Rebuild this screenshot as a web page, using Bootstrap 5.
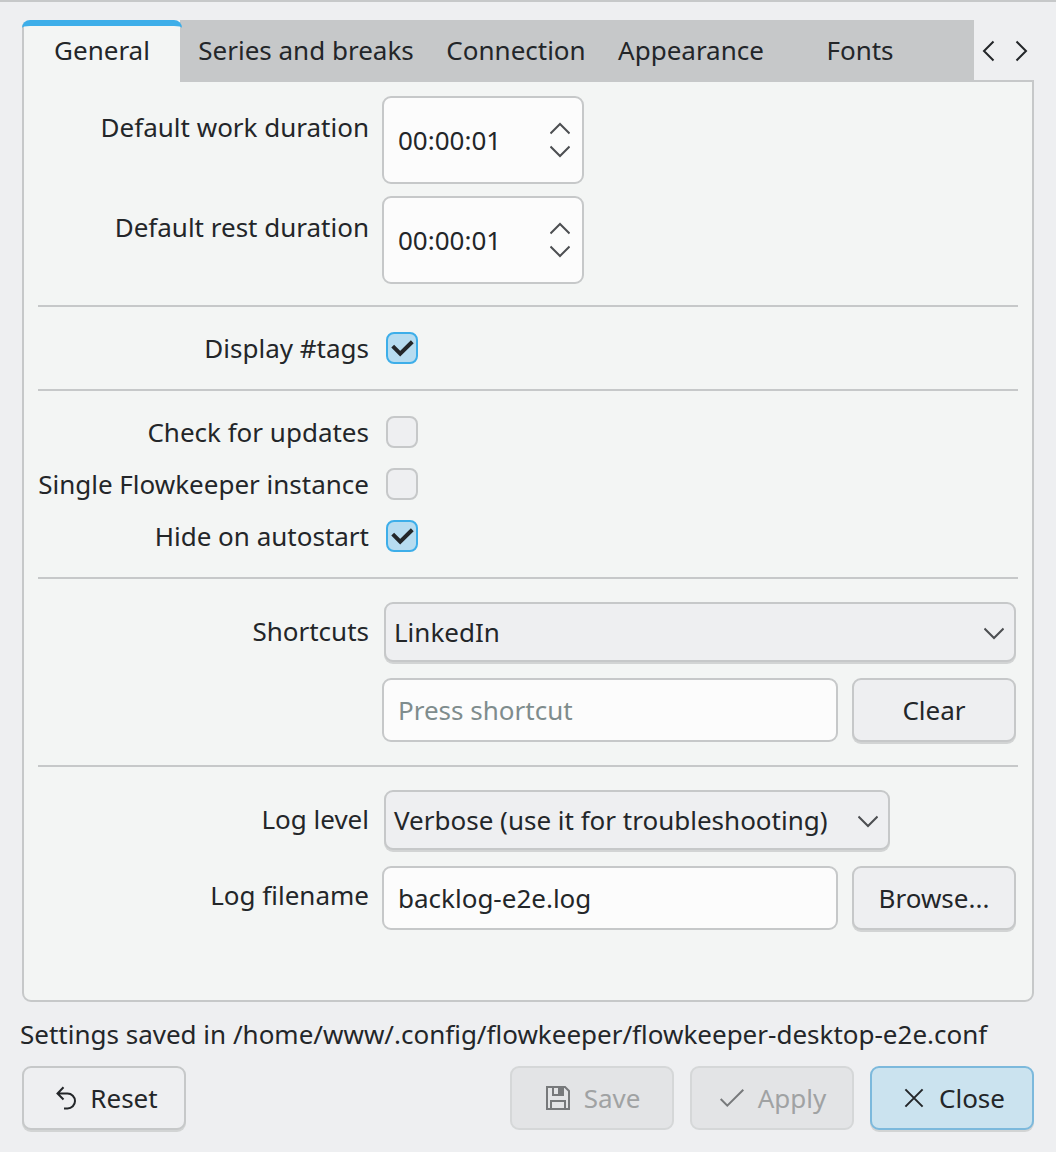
<!DOCTYPE html>
<html lang="en">
<head>
<meta charset="utf-8">
<meta name="viewport" content="width=device-width, initial-scale=1">
<title>Settings</title>
<link href="https://cdn.jsdelivr.net/npm/bootstrap@5.3.0/dist/css/bootstrap.min.css" rel="stylesheet">
<style>
  :root { --line: #c6c8c9; --win: #eeeff1; --view: #f3f5f4; --ink: #232629; --accent: #3daee9; }
  body { background: var(--win); color: var(--ink); font-family: "Noto Sans", sans-serif; font-size: 26px; line-height: 36px; }
  .dialog-window { width: 1056px; height: 1152px; border-top: 2px solid var(--line); padding: 18px 22px 0; overflow: hidden; }
  svg { display: block; flex: none; fill: none; }

  /* tabs */
  .tab-strip { height: 60px; }
  .tab-strip .nav { width: 952px; flex: none; --bs-nav-link-color: var(--ink); --bs-nav-link-hover-color: var(--ink); }
  .tab-strip .nav-item { height: 60px; background: var(--line); }
  .tab-strip .nav-link { padding: 12px 0; text-align: center; font-size: inherit; font-weight: 400; color: var(--ink); white-space: nowrap; }
  .tab-strip .nav-item.current { position: relative; width: 158px; height: 62px; background: linear-gradient(to right, var(--line) 2px, var(--view) 2px); border-radius: 8px 0 0 0; }
  .tab-strip .nav-item.current .nav-link, .tab-strip .w-series .nav-link { padding-left: 2px; }
  .tab-strip .nav-item.current::before { content: ""; position: absolute; left: 0; top: 0; width: 160px; height: 8px; border-top: 6px solid var(--accent); border-radius: 9px 9px 0 0; }
  .w-series { width: 250px; } .w-conn { width: 172px; } .w-appear { width: 178px; } .w-fonts { width: 160px; }
  .scroll-btn { border: 0; background: none; padding: 0; width: 30px; height: 60px; }

  /* settings page */
  .settings-page { height: 922px; background: var(--view); border: 2px solid var(--line); border-radius: 0 0 9px 9px; padding: 14px 14px 0; }
  .field-label { width: 331px; margin-right: 13px; text-align: right; white-space: nowrap; flex: none; }
  .lbl-spin { padding-top: 13px; } .lbl-box { padding-top: 11px; }
  .rule { height: 2px; background: var(--line); }
  .m-spin { margin: 21px 0 25px; } .m-check { margin: 25px 0; } .m-mix { margin: 25px 0 23px; } .m-box { margin: 23px 0; }
  .g12 { gap: 12px; } .g14 { gap: 14px; } .g16 { gap: 16px; } .g20 { gap: 20px; }

  .entry { background: #fcfcfc; border: 2px solid var(--line); border-radius: 9px; }
  .time-spin { width: 202px; height: 88px; padding: 0 12px 0 14px; }
  .line-entry { width: 456px; height: 64px; padding: 0 14px; color: var(--ink); font-size: inherit; line-height: 36px; }
  .line-entry::placeholder { color: #7f8c8d; opacity: 1; }
  .line-entry:focus { outline: 0; }
  .spin-arrows { gap: 10px; }

  .tick-row { height: 32px; }
  .tick-box { width: 32px; height: 32px; margin-left: 4px; border: 2px solid var(--line); border-radius: 8px; background: var(--win); }
  .tick-box.on { background: #b7dcf0; border-color: var(--accent); }

  .push { --bs-btn-color: var(--ink); --bs-btn-hover-color: var(--ink); --bs-btn-bg: var(--win); --bs-btn-hover-bg: var(--win); --bs-btn-border-color: var(--line); --bs-btn-hover-border-color: var(--line);
    --bs-btn-padding-x: 0; --bs-btn-padding-y: 0; --bs-btn-font-size: 26px; --bs-btn-border-width: 2px; --bs-btn-border-radius: 9px;
    --bs-btn-disabled-color: #a0a2a3; --bs-btn-disabled-bg: #e3e4e6; --bs-btn-disabled-border-color: #d5d7d8; --bs-btn-disabled-opacity: 1;
    width: 164px; height: 64px; line-height: 36px; box-shadow: 0 2px 0 #d2d4d4; }
  .push:disabled { box-shadow: none; }
  .push.primary { --bs-btn-bg: #cbe3ef; --bs-btn-border-color: #7cb9dc; --bs-btn-hover-bg: #cbe3ef; --bs-btn-hover-border-color: #7cb9dc; }
  .combo { height: 60px; margin-left: 2px; padding: 0 10px 0 8px; }
  .combo svg { margin-top: 2px; }
  .combo-wide { width: 632px; } .combo-log { width: 506px; }
  .icon-gap { gap: 8px; }
  .icon-gap:disabled svg { margin: 0 2px 0 -2px; }
  .icon-gap.primary svg { margin: 0 1px 0 -1px; }
  .status-line { margin: 14px 0 14px -2px; height: 36px; white-space: nowrap; }
</style>
</head>
<body>
<div class="dialog-window">
  <div class="tab-strip d-flex">
    <ul class="nav flex-nowrap">
      <li class="nav-item current"><a class="nav-link" href="#">General</a></li>
      <li class="nav-item w-series"><a class="nav-link" href="#">Series and breaks</a></li>
      <li class="nav-item w-conn"><a class="nav-link" href="#">Connection</a></li>
      <li class="nav-item w-appear"><a class="nav-link" href="#">Appearance</a></li>
      <li class="nav-item w-fonts"><a class="nav-link" href="#">Fonts</a></li>
      <li class="nav-item flex-fill"></li>
    </ul>
    <button class="scroll-btn" aria-label="Previous tabs"><svg width="30" height="60" stroke="#232629" stroke-width="2"><path d="M19.500 21.500 10 31l9.500 9.500"/></svg></button>
    <button class="scroll-btn" aria-label="Next tabs"><svg width="30" height="60" stroke="#232629" stroke-width="2"><path d="M12.500 21.500 22 31l-9.500 9.500"/></svg></button>
  </div>

  <main class="settings-page">
    <div class="d-flex flex-column g12">
      <div class="d-flex">
        <div class="field-label lbl-spin">Default work duration</div>
        <div class="entry time-spin d-flex align-items-center justify-content-between">
          <span>00:00:01</span>
          <span class="spin-arrows d-flex flex-column">
            <svg width="20" height="14" stroke="#4d4f52" stroke-width="2"><path d="M.5 12.500 10 3l9.500 9.500"/></svg>
            <svg width="20" height="14" stroke="#4d4f52" stroke-width="2"><path d="M.5 1.500 10 11l9.500-9.500"/></svg>
          </span>
        </div>
      </div>
      <div class="d-flex">
        <div class="field-label lbl-spin">Default rest duration</div>
        <div class="entry time-spin d-flex align-items-center justify-content-between">
          <span>00:00:01</span>
          <span class="spin-arrows d-flex flex-column">
            <svg width="20" height="14" stroke="#4d4f52" stroke-width="2"><path d="M.5 12.500 10 3l9.500 9.500"/></svg>
            <svg width="20" height="14" stroke="#4d4f52" stroke-width="2"><path d="M.5 1.500 10 11l9.500-9.500"/></svg>
          </span>
        </div>
      </div>
    </div>

    <div class="rule m-spin"></div>
    <div class="tick-row d-flex align-items-center">
      <div class="field-label">Display #tags</div>
      <span class="tick-box on" role="checkbox" aria-checked="true"><svg width="28" height="28" stroke="#232629" stroke-width="4"><path d="M4.700 12.200 12.200 19.600 24.300 7.700"/></svg></span>
    </div>
    <div class="rule m-check"></div>
    <div class="d-flex flex-column g20">
      <div class="tick-row d-flex align-items-center">
        <div class="field-label">Check for updates</div>
        <span class="tick-box" role="checkbox" aria-checked="false"></span>
      </div>
      <div class="tick-row d-flex align-items-center">
        <div class="field-label">Single Flowkeeper instance</div>
        <span class="tick-box" role="checkbox" aria-checked="false"></span>
      </div>
      <div class="tick-row d-flex align-items-center">
        <div class="field-label">Hide on autostart</div>
        <span class="tick-box on" role="checkbox" aria-checked="true"><svg width="28" height="28" stroke="#232629" stroke-width="4"><path d="M4.700 12.200 12.200 19.600 24.300 7.700"/></svg></span>
      </div>
    </div>

    <div class="rule m-mix"></div>
    <div class="d-flex">
      <div class="field-label lbl-box">Shortcuts</div>
      <div class="d-flex flex-column g16">
        <button class="btn push combo combo-wide d-flex align-items-center justify-content-between">LinkedIn
          <svg width="20" height="14" stroke="#4d4f52" stroke-width="2"><path d="M.5 2.500 10 12l9.500-9.500"/></svg></button>
        <div class="d-flex g14">
          <input class="entry line-entry" placeholder="Press shortcut" aria-label="Shortcut">
          <button class="btn push">Clear</button>
        </div>
      </div>
    </div>

    <div class="rule m-box"></div>
    <div class="d-flex flex-column g16">
      <div class="d-flex">
        <div class="field-label lbl-box">Log level</div>
        <button class="btn push combo combo-log d-flex align-items-center justify-content-between">Verbose (use it for troubleshooting)
          <svg width="20" height="14" stroke="#4d4f52" stroke-width="2"><path d="M.5 2.500 10 12l9.500-9.500"/></svg></button>
      </div>
      <div class="d-flex">
        <div class="field-label lbl-box">Log filename</div>
        <div class="d-flex g14">
          <input class="entry line-entry" value="backlog-e2e.log" aria-label="Log filename">
          <button class="btn push">Browse...</button>
        </div>
      </div>
    </div>
  </main>

  <div class="status-line">Settings saved in /home/www/.config/flowkeeper/flowkeeper-desktop-e2e.conf</div>

  <footer class="d-flex g16">
    <button class="btn push me-auto d-flex align-items-center justify-content-center icon-gap">
      <svg width="32" height="32" stroke="#232629" stroke-width="2"><path d="M13.500 5.300 7.500 11.500l6 6M7.500 11.500h10a7.500 7.500 0 0 1 0 15H14"/></svg>Reset</button>
    <button class="btn push d-flex align-items-center justify-content-center icon-gap" disabled>
      <svg width="32" height="32" stroke="#77797b" stroke-width="2"><path d="M5 5h18l4 4v18H5zM11 5v8h10M9 27v-8h14v8"/><path d="M16 4h6v10h-6z" fill="#77797b" stroke="none"/></svg>Save</button>
    <button class="btn push d-flex align-items-center justify-content-center icon-gap" disabled>
      <svg width="32" height="32" stroke="#77797b" stroke-width="2"><path d="M4.700 17 11.300 23.600 27.300 7.700"/></svg>Apply</button>
    <button class="btn push primary d-flex align-items-center justify-content-center icon-gap">
      <svg width="32" height="32" stroke="#232629" stroke-width="2"><path d="M7.400 7.400 24.600 24.600M24.600 7.400 7.400 24.600"/></svg>Close</button>
  </footer>
</div>
<script src="https://cdn.jsdelivr.net/npm/bootstrap@5.3.0/dist/js/bootstrap.bundle.min.js"></script>
</body>
</html>
